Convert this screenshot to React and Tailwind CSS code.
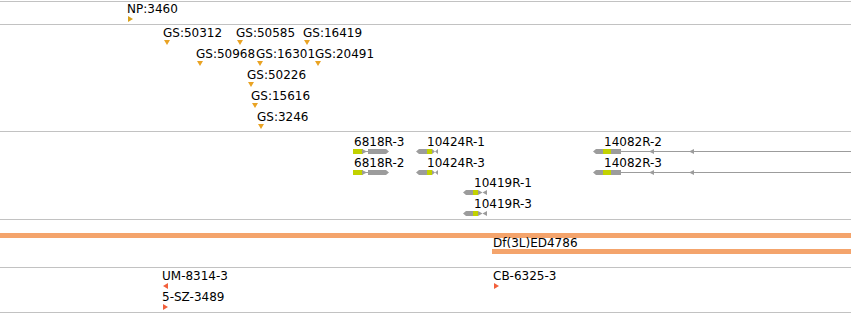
import clsx from "clsx";

const GRAY = "#9c9c9c";
const CDS = "#c2d200";

// one feature: label on top, glyph under it; left edge is the genomic position
const Feature = ({ className, label, labelClass, children }) => (
  <div className={clsx("absolute top-0 flex flex-col items-start", className)}>
    <span className={clsx("whitespace-nowrap leading-[14px]", labelClass)}>{label}</span>
    {children}
  </div>
);

const Down = () => (
  <svg width="6" height="5" className="ml-px block">
    <polygon points="0,0 6,0 3,5" fill="#e9a324" />
  </svg>
);

const Right = ({ color }) => (
  <svg width="5" height="6" className="ml-px block">
    <polygon points="0,0 5,3 0,6" fill={color} />
  </svg>
);

const Left = ({ color }) => (
  <svg width="5" height="6" className="ml-px block">
    <polygon points="5,0 0,3 5,6" fill={color} />
  </svg>
);

const Gene6818 = () => (
  <svg width="36" height="5" className="block">
    <rect x="0" y="0" width="10" height="5" fill={CDS} />
    <polygon points="9,0 14,2.5 9,5" fill={GRAY} />
    <rect x="13" y="2" width="3" height="1" fill={GRAY} />
    <polygon points="15,0 33,0 36,2.5 33,5 15,5" fill={GRAY} />
  </svg>
);

const GeneRev = ({ w = 22, g = 11, y = 5 }) => {
  const mid = g + y + (w - g - y) / 2;
  return (
    <svg width={w} height="5" className="block">
      <polygon points={`0,2.5 3,0 ${g},0 ${g},5 3,5`} fill={GRAY} />
      <rect x={g} y="0" width={y} height="5" fill={CDS} />
      <polygon points={`${g + y},0 ${mid},2.5 ${g + y},5`} fill={GRAY} />
      <polygon points={`${w},0 ${mid},2.5 ${w},5`} fill={GRAY} />
    </svg>
  );
};

const Gene14082 = () => (
  <svg width="258" height="5" className="block">
    <polygon points="0,2.5 3,0 10,0 10,5 3,5" fill={GRAY} />
    <rect x="10" y="0" width="8" height="5" fill={CDS} />
    <rect x="18" y="0" width="10" height="5" fill={GRAY} />
    <rect x="28" y="2" width="230" height="1" fill={GRAY} />
    <polygon points="56,2.5 61,0 61,5" fill={GRAY} />
    <polygon points="96,2.5 101,0 101,5" fill={GRAY} />
  </svg>
);

const Track = ({ className, children }) => (
  <div className={clsx("flex flex-col border-t border-[#c2c2c2]", className)}>{children}</div>
);

const Row = ({ className = "h-[21px]", children }) => (
  <div className={clsx("relative", className)}>{children}</div>
);

const App = () => {
  return (
    <div className="w-[851px] h-[313px] overflow-hidden bg-white pt-px font-['DejaVu_Sans',sans-serif] text-[12px] text-black">
      {/* NP track */}
      <Track className="h-[23px]">
        <Row>
          <Feature className="left-[127px]" label="NP:3460">
            <Right color="#d9a11a" />
          </Feature>
        </Row>
      </Track>

      {/* GS track */}
      <Track className="h-[107px] pt-px">
        <Row>
          <Feature className="left-[163px]" label="GS:50312"><Down /></Feature>
          <Feature className="left-[236px]" label="GS:50585"><Down /></Feature>
          <Feature className="left-[303px]" label="GS:16419"><Down /></Feature>
        </Row>
        <Row>
          <Feature className="left-[196px]" label="GS:50968"><Down /></Feature>
          <Feature className="left-[256px]" label="GS:16301"><Down /></Feature>
          <Feature className="left-[314px]" label="GS:20491" labelClass="pl-px"><Down /></Feature>
        </Row>
        <Row>
          <Feature className="left-[247px]" label="GS:50226"><Down /></Feature>
        </Row>
        <Row>
          <Feature className="left-[251px]" label="GS:15616"><Down /></Feature>
        </Row>
        <Row>
          <Feature className="left-[257px]" label="GS:3246"><Down /></Feature>
        </Row>
      </Track>

      {/* gene models */}
      <Track className="h-[88px] pt-[3px]">
        <Row>
          <Feature className="left-[353px]" label="6818R-3" labelClass="pl-px"><Gene6818 /></Feature>
          <Feature className="left-[416px]" label="10424R-1" labelClass="pl-[11px]"><GeneRev /></Feature>
          <Feature className="left-[593px]" label="14082R-2" labelClass="pl-[11px]"><Gene14082 /></Feature>
        </Row>
        <Row className="h-[20px]">
          <Feature className="left-[353px]" label="6818R-2" labelClass="pl-px"><Gene6818 /></Feature>
          <Feature className="left-[416px]" label="10424R-3" labelClass="pl-[11px]"><GeneRev /></Feature>
          <Feature className="left-[593px]" label="14082R-3" labelClass="pl-[11px]"><Gene14082 /></Feature>
        </Row>
        <Row>
          <Feature className="left-[463px]" label="10419R-1" labelClass="pl-[11px]"><GeneRev w={24} g={10} y={5} /></Feature>
        </Row>
        <Row>
          <Feature className="left-[463px]" label="10419R-3" labelClass="pl-[11px]"><GeneRev w={24} g={10} y={5} /></Feature>
        </Row>
      </Track>

      {/* deficiencies */}
      <Track className="h-[48px] pt-[13px]">
        <div className="h-[5px] w-full bg-[#f4a46c]" />
        <div className="flex flex-col items-start pl-[492px] -mt-[2px]">
          <span className="whitespace-nowrap pl-px leading-[14px]">Df(3L)ED4786</span>
          <div className="-mt-px h-[5px] w-[359px] bg-[#f4a46c]" />
        </div>
      </Track>

      {/* insertions */}
      <Track className="h-[46px] border-b pt-px">
        <Row>
          <Feature className="left-[162px]" label="UM-8314-3"><Left color="#f2603c" /></Feature>
          <Feature className="left-[493px]" label="CB-6325-3"><Right color="#f2603c" /></Feature>
        </Row>
        <Row>
          <Feature className="left-[162px]" label="5-SZ-3489"><Right color="#f2603c" /></Feature>
        </Row>
      </Track>
    </div>
  );
};

export default App;
